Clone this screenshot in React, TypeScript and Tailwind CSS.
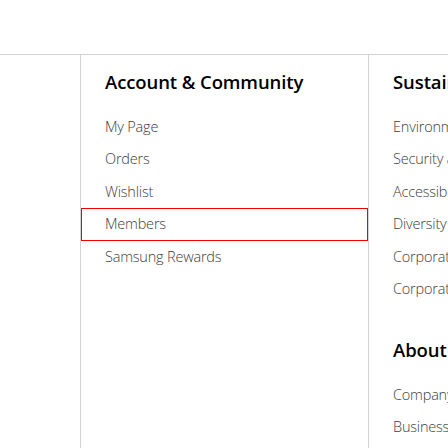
import React from 'react';

const account = ['My Page', 'Orders', 'Wishlist', 'Members', 'Samsung Rewards'];
const sustain = [
  'Environment',
  'Security and Privacy',
  'Accessibility',
  'Diversity · Inclusion',
  'Corporate Citizenship',
  'Corporate Sustainability',
];
const about = ['Company Info', 'Business Area'];

const font = { fontFamily: '"Open Sans", "Noto Sans", Arial, sans-serif' };

const Item = ({ label, active }: { label: string; active?: boolean }) => (
  <li
    className={
      'flex h-[32.5px] items-center whitespace-nowrap pl-6 text-[14.5px] font-light tracking-[-0.2px] text-[#3c3c3c] ' +
      (active ? 'outline outline-1 -outline-offset-1 outline-[#ee0000]' : '')
    }
  >
    {label}
  </li>
);

const Heading = ({ children }: { children: React.ReactNode }) => (
  <h3 className="flex h-6 items-center whitespace-nowrap pl-6 text-[18.5px] font-semibold tracking-[-0.1px] text-black">
    {children}
  </h3>
);

export default function App() {
  return (
    <div className="flex h-[448px] w-[448px] flex-col overflow-hidden bg-white" style={font}>
      {/* top strip */}
      <div className="h-[55px] shrink-0 border-b border-[#d4d4d4]" />

      <div className="flex flex-1">
        <div className="w-[81px] shrink-0 border-r border-[#d4d4d4]" />

        {/* Account & Community */}
        <div className="w-[288px] shrink-0 border-r border-[#d4d4d4] pt-[15px]">
          <Heading>Account &amp; Community</Heading>
          <ul className="mt-[16.5px]">
            {account.map((a) => (
              <Item key={a} label={a} active={a === 'Members'} />
            ))}
          </ul>
        </div>

        {/* Sustainability / About */}
        <div className="min-w-0 flex-1 overflow-hidden pt-[15px]">
          <Heading>Sustainability</Heading>
          <ul className="mt-[16.5px]">
            {sustain.map((s) => (
              <Item key={s} label={s} />
            ))}
          </ul>
          <div className="mt-[32.5px]">
            <Heading>About Us</Heading>
          </div>
          <ul className="mt-[16.5px]">
            {about.map((s) => (
              <Item key={s} label={s} />
            ))}
          </ul>
        </div>
      </div>
    </div>
  );
}
